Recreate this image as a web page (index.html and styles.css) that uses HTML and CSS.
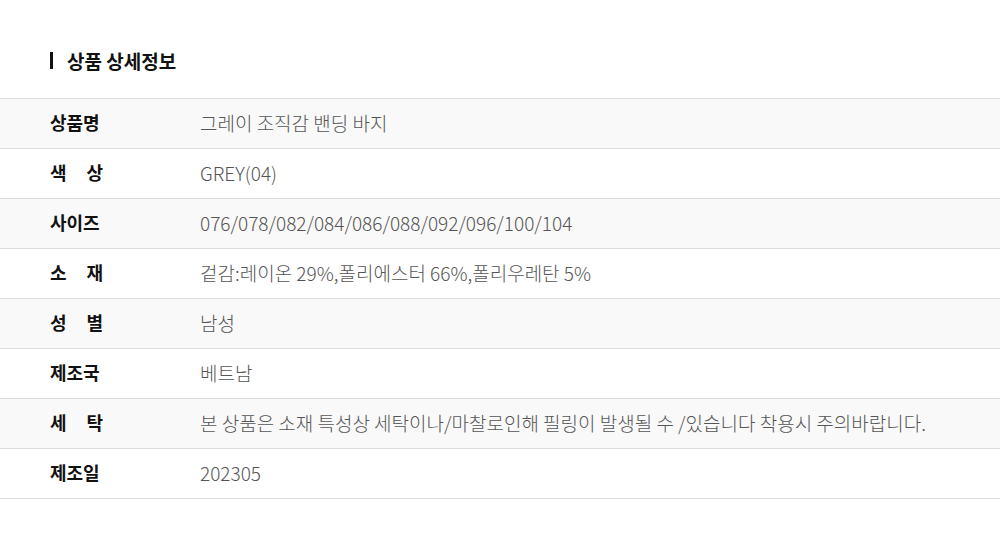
FILE: index.html
```html
<!DOCTYPE html>
<html>
	<head>
		<meta charset="utf-8">
		<title>상품 상세정보</title>
		<link rel="stylesheet" href="styles.css">
	</head>
	<body>
		<div id="detail">
			<h3 class="title">상품 상세정보</h3>
			<ul class="infoList">
				<li class="row"><span class="label">상품명</span><span class="value">그레이 조직감 밴딩 바지</span></li>
				<li class="row"><span class="label">색 상</span><span class="value">GREY(04)</span></li>
				<li class="row"><span class="label">사이즈</span><span class="value">076/078/082/084/086/088/092/096/100/104</span></li>
				<li class="row"><span class="label">소 재</span><span class="value">겉감:레이온 29%,폴리에스터 66%,폴리우레탄 5%</span></li>
				<li class="row"><span class="label">성 별</span><span class="value">남성</span></li>
				<li class="row"><span class="label">제조국</span><span class="value">베트남</span></li>
				<li class="row"><span class="label">세 탁</span><span class="value">본 상품은 소재 특성상 세탁이나/마찰로인해 필링이 발생될 수 /있습니다 착용시 주의바랍니다.</span></li>
				<li class="row"><span class="label">제조일</span><span class="value">202305</span></li>
			</ul>
		</div>
	</body>
</html>
```

FILE: styles.css
```css
*{
	margin: 0;
	padding: 0;
}
body{
	font-family: "Noto Sans CJK KR", "Noto Sans", sans-serif;
	background-color: #fff;
}
#detail{
	padding-top: 46px;
}
.title{
	display: flex;
	align-items: center;
	margin-left: 50px;
	height: 28px;
	font-size: 19px;
	font-weight: 700;
	color: #111;
	margin-bottom: 24px;
}
.title:before{
	content: "";
	width: 3px;
	height: 17px;
	background-color: #111;
	margin-right: 14px;
}
.infoList{
	list-style: none;
	border-top: 1px solid #ddd;
}
.row{
	display: flex;
	align-items: center;
	height: 49px;
	padding-bottom: 3px;
	box-sizing: border-box;
	height: 50px;
	border-bottom: 1px solid #ddd;
}
.row:nth-child(odd){
	background-color: #f9f9f9;
}
.label{
	width: 53px;
	margin-left: 50px;
	margin-right: 97px;
	font-size: 18px;
	font-weight: 700;
	color: #111;
	text-align: justify;
	text-align-last: justify;
}
.value{
	font-size: 19px;
	font-weight: 300;
	color: #555;
}
```
